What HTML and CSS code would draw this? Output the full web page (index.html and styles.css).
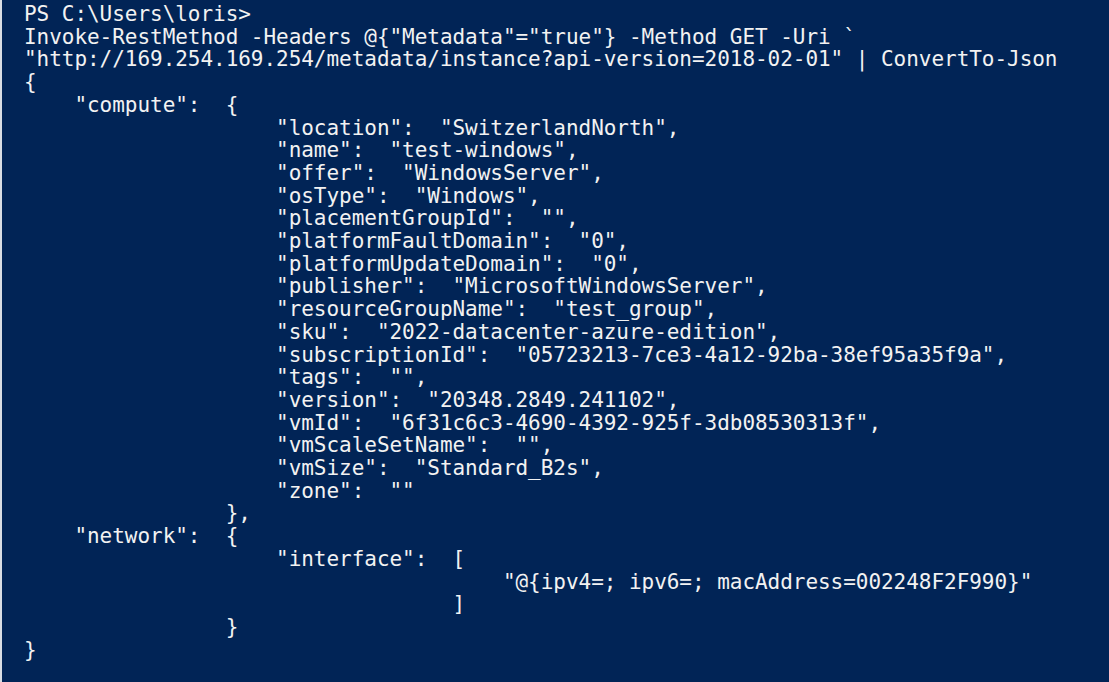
FILE: index.html
```html
<!DOCTYPE html>
<html lang="en">
<head>
<meta charset="utf-8">
<title>PowerShell</title>
<link rel="stylesheet" href="styles.css">
</head>
<body>
<div class="console">
<pre class="output">PS C:\Users\loris&gt;
Invoke-RestMethod -Headers @{"Metadata"="true"} -Method GET -Uri `
"http://169.254.169.254/metadata/instance?api-version=2018-02-01" | ConvertTo-Json
{
    "compute":  {
                    "location":  "SwitzerlandNorth",
                    "name":  "test-windows",
                    "offer":  "WindowsServer",
                    "osType":  "Windows",
                    "placementGroupId":  "",
                    "platformFaultDomain":  "0",
                    "platformUpdateDomain":  "0",
                    "publisher":  "MicrosoftWindowsServer",
                    "resourceGroupName":  "test_group",
                    "sku":  "2022-datacenter-azure-edition",
                    "subscriptionId":  "05723213-7ce3-4a12-92ba-38ef95a35f9a",
                    "tags":  "",
                    "version":  "20348.2849.241102",
                    "vmId":  "6f31c6c3-4690-4392-925f-3db08530313f",
                    "vmScaleSetName":  "",
                    "vmSize":  "Standard_B2s",
                    "zone":  ""
                },
    "network":  {
                    "interface":  [
                                      "@{ipv4=; ipv6=; macAddress=002248F2F990}"
                                  ]
                }
}</pre>
</div>
</body>
</html>
```

FILE: styles.css
```css
html, body {
  margin: 0;
  padding: 0;
  height: 100%;
  background: #012456;
}

.console {
  height: 100%;
  box-sizing: border-box;
  border-left: 2px solid #d9dde3;
  background: #012456;
  padding: 3px 0 0 22px;
  overflow: hidden;
}

.output {
  margin: 0;
  font-family: "DejaVu Sans Mono", "Liberation Mono", monospace;
  font-size: 21px;
  line-height: 22.7px;
  letter-spacing: -0.04px;
  color: #f2f2f2;
  white-space: pre;
}
```
